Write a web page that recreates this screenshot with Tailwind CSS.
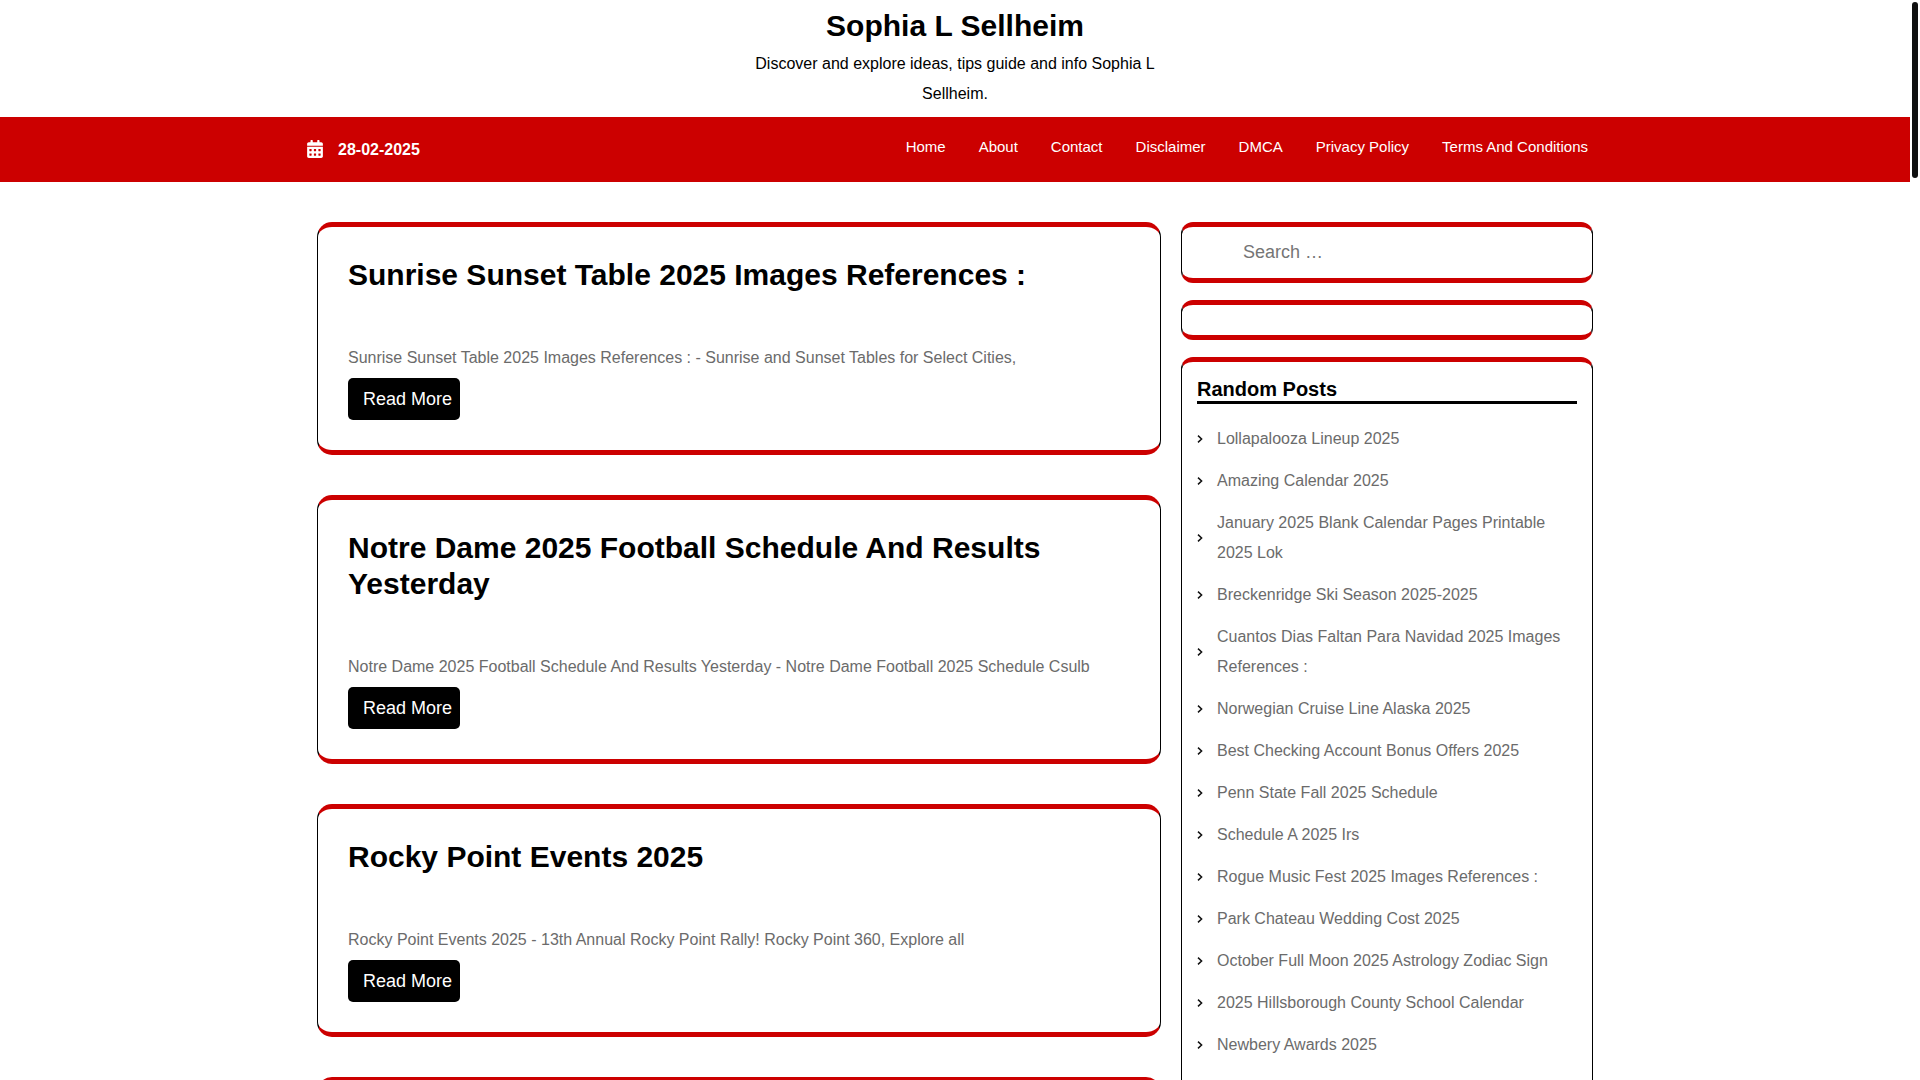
<!DOCTYPE html>
<html lang="en">
<head>
<meta charset="utf-8">
<meta name="viewport" content="width=device-width, initial-scale=1">
<title>Sophia L Sellheim</title>
<script src="https://cdn.jsdelivr.net/npm/@tailwindcss/browser@4"></script>
</head>
<body class="h-screen overflow-hidden bg-white pr-[10px] font-['Liberation_Sans',Arial,sans-serif] text-base leading-[30px] text-[#6b6b6b]">
<header>
  <div class="mx-auto max-w-[424px] pt-2 pb-2 text-center text-black">
    <h1 class="text-[30px] leading-9 font-bold"><a href="#">Sophia L Sellheim</a></h1>
    <p class="mt-[5px]">Discover and explore ideas, tips guide and info Sophia L Sellheim.</p>
  </div>
  <div class="bg-[#cc0000] text-white">
    <div class="mx-auto flex h-[65px] max-w-[1296px] items-center justify-between pr-[15px]">
      <div class="flex items-center gap-[15px] font-bold">
        <svg class="mb-[2px] h-[18px] w-4" viewBox="0 0 448 512" fill="currentColor" aria-hidden="true"><path d="M0 464c0 26.500 21.500 48 48 48h352c26.500 0 48-21.500 48-48V192H0v272zm320-196c0-6.600 5.400-12 12-12h40c6.600 0 12 5.400 12 12v40c0 6.600-5.400 12-12 12h-40c-6.600 0-12-5.400-12-12v-40zm0 128c0-6.600 5.400-12 12-12h40c6.600 0 12 5.400 12 12v40c0 6.600-5.400 12-12 12h-40c-6.600 0-12-5.400-12-12v-40zM192 268c0-6.600 5.400-12 12-12h40c6.600 0 12 5.400 12 12v40c0 6.600-5.400 12-12 12h-40c-6.600 0-12-5.400-12-12v-40zm0 128c0-6.600 5.400-12 12-12h40c6.600 0 12 5.400 12 12v40c0 6.600-5.400 12-12 12h-40c-6.600 0-12-5.400-12-12v-40zM64 268c0-6.600 5.400-12 12-12h40c6.600 0 12 5.400 12 12v40c0 6.600-5.400 12-12 12H76c-6.600 0-12-5.400-12-12v-40zm0 128c0-6.600 5.400-12 12-12h40c6.600 0 12 5.400 12 12v40c0 6.600-5.400 12-12 12H76c-6.600 0-12-5.400-12-12v-40zM400 64h-48V16c0-8.800-7.200-16-16-16h-32c-8.800 0-16 7.200-16 16v48H160V16c0-8.800-7.200-16-16-16h-32c-8.800 0-16 7.200-16 16v48H48C21.500 64 0 85.500 0 112v48h448v-48c0-26.500-21.500-48-48-48z"/></svg>
        <span>28-02-2025</span>
      </div>
      <nav class="flex gap-[33px] pb-[6px] text-[15px]">
        <a href="#">Home</a>
        <a href="#">About</a>
        <a href="#">Contact</a>
        <a href="#">Disclaimer</a>
        <a href="#">DMCA</a>
        <a href="#">Privacy Policy</a>
        <a href="#">Terms And Conditions</a>
      </nav>
    </div>
  </div>
</header>

<div class="mx-auto flex max-w-[1276px] items-start gap-5 pt-10">
  <main class="flex min-w-0 flex-1 flex-col gap-10">
    <article class="rounded-[15px] border-x border-y-[5px] border-x-black border-y-[#cc0000] p-[30px]">
      <h2 class="mb-[50px] text-[30px] leading-9 font-bold text-black"><a href="#">Sunrise Sunset Table 2025 Images References :</a></h2>
      <p class="mb-[5px]">Sunrise Sunset Table 2025 Images References : - Sunrise and Sunset Tables for Select Cities,</p>
      <a href="#" class="flex h-[42px] w-28 items-center rounded-[5px] bg-black pl-[15px] text-lg text-white">Read More</a>
    </article>
    <article class="rounded-[15px] border-x border-y-[5px] border-x-black border-y-[#cc0000] p-[30px]">
      <h2 class="mb-[50px] text-[30px] leading-9 font-bold text-black"><a href="#">Notre Dame 2025 Football Schedule And Results Yesterday</a></h2>
      <p class="mb-[5px]">Notre Dame 2025 Football Schedule And Results Yesterday - Notre Dame Football 2025 Schedule Csulb</p>
      <a href="#" class="flex h-[42px] w-28 items-center rounded-[5px] bg-black pl-[15px] text-lg text-white">Read More</a>
    </article>
    <article class="rounded-[15px] border-x border-y-[5px] border-x-black border-y-[#cc0000] p-[30px]">
      <h2 class="mb-[50px] text-[30px] leading-9 font-bold text-black"><a href="#">Rocky Point Events 2025</a></h2>
      <p class="mb-[5px]">Rocky Point Events 2025 - 13th Annual Rocky Point Rally! Rocky Point 360, Explore all</p>
      <a href="#" class="flex h-[42px] w-28 items-center rounded-[5px] bg-black pl-[15px] text-lg text-white">Read More</a>
    </article>
    <article class="h-20 rounded-[15px] border-x border-y-[5px] border-x-black border-y-[#cc0000]"></article>
  </main>

  <aside class="flex w-[412px] shrink-0 flex-col gap-[17px]">
    <form role="search" class="flex h-[61px] rounded-xl border-x border-y-[5px] border-x-black border-y-[#cc0000] pr-4 pb-[1px] pl-[61px]">
      <input type="search" aria-label="Search" placeholder="Search …" class="w-full bg-transparent text-lg text-black outline-none placeholder:text-[#757575]">
    </form>
    <section class="h-10 rounded-xl border-x border-y-[5px] border-x-black border-y-[#cc0000]"></section>
    <section class="rounded-xl border-x border-y-[5px] border-x-black border-y-[#cc0000] px-[15px] pt-[15px] pb-12">
      <h3 class="mb-5 border-b-[3px] border-black text-xl leading-6 font-bold text-black">Random Posts</h3>
      <ul id="posts" class="flex flex-col gap-3"></ul>
    </section>
  </aside>
</div>

<div class="fixed top-[2px] right-[2px] h-[176px] w-[6px] rounded-full bg-[#0f1010]"></div>

<script>
const posts = [
  "Lollapalooza Lineup 2025",
  "Amazing Calendar 2025",
  "January 2025 Blank Calendar Pages Printable 2025 Lok",
  "Breckenridge Ski Season 2025-2025",
  "Cuantos Dias Faltan Para Navidad 2025 Images References :",
  "Norwegian Cruise Line Alaska 2025",
  "Best Checking Account Bonus Offers 2025",
  "Penn State Fall 2025 Schedule",
  "Schedule A 2025 Irs",
  "Rogue Music Fest 2025 Images References :",
  "Park Chateau Wedding Cost 2025",
  "October Full Moon 2025 Astrology Zodiac Sign",
  "2025 Hillsborough County School Calendar",
  "Newbery Awards 2025"
];
document.getElementById("posts").innerHTML = posts.map(t => `
  <li class="flex items-center gap-[14px]">
    <svg class="h-2 w-[6px] shrink-0" viewBox="0 0 6 8" fill="none" stroke="#111" stroke-width="1.500" aria-hidden="true"><path d="M1 .6 4.600 4 1 7.400"/></svg>
    <a href="#">${t}</a>
  </li>`).join("");
</script>
</body>
</html>
